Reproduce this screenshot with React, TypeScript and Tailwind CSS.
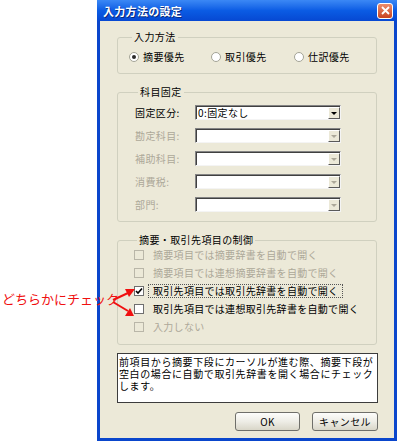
import React from 'react';

const ROWS = [
  { label: '固定区分:', value: '0:固定なし', enabled: true },
  { label: '勘定科目:', value: '', enabled: false },
  { label: '補助科目:', value: '', enabled: false },
  { label: '消費税:', value: '', enabled: false },
  { label: '部門:', value: '', enabled: false },
];

const CHECKS = [
  { text: '摘要項目では摘要辞書を自動で開く', enabled: false, checked: false, focus: false },
  { text: '摘要項目では連想摘要辞書を自動で開く', enabled: false, checked: false, focus: false },
  { text: '取引先項目では取引先辞書を自動で開く', enabled: true, checked: true, focus: true },
  { text: '取引先項目では連想取引先辞書を自動で開く', enabled: true, checked: false, focus: false },
  { text: '入力しない', enabled: false, checked: false, focus: false },
];

function Radio({ label, selected, width }: { label: string; selected?: boolean; width: string }) {
  return (
    <div className={`flex items-center ${width}`}>
      <span className="w-[10px] h-[10px] rounded-full bg-white border border-[#a4a496] flex items-center justify-center">
        {selected && <span className="w-[4px] h-[4px] rounded-full bg-[#2a2a2a]" />}
      </span>
      <span className="ml-[4px]">{label}</span>
    </div>
  );
}

function Combo({ value, enabled }: { value: string; enabled: boolean }) {
  return (
    <div className="w-[146px] h-[15px] flex bg-white border border-t-[#848484] border-l-[#848484] border-b-[#f4f4f4] border-r-[#f4f4f4] shadow-[inset_1px_1px_0_#404040]">
      <div className="flex-1 pl-[2px] pt-[1px] leading-[12px]">{value}</div>
      <div className="mt-[1px] w-[12px] bg-[#ece9d8] border border-t-white border-l-white border-b-[#5a5a5a] border-r-[#5a5a5a] flex items-center justify-center">
        <span className={`w-0 h-0 border-x-[3px] border-x-transparent border-t-[3px] ${enabled ? 'border-t-black' : 'border-t-[#aca899]'}`} />
      </div>
    </div>
  );
}

function Check({ enabled, checked }: { enabled: boolean; checked: boolean }) {
  return (
    <span
      className={`w-[10px] h-[10px] border flex items-center justify-center ${
        enabled ? 'bg-white border-[#6f6f6f]' : 'bg-[#ece9d8] border-[#b9b6a8]'
      }`}
    >
      {checked && (
        <svg width="8" height="8" viewBox="0 0 8 8">
          <path d="M1 4 L3 6 L7 1.5" stroke="#000" strokeWidth="1.6" fill="none" />
        </svg>
      )}
    </span>
  );
}

export default function App() {
  return (
    <div className="relative w-[397px] h-[441px] bg-white overflow-hidden font-['Noto_Sans_CJK_JP',sans-serif] text-[10px] leading-[12px] text-black">
      <div className="ml-[97px] w-[300px] h-[441px] flex flex-col bg-[#0a46cc]">
        {/* title bar */}
        <div className="h-[21px] flex items-center justify-between pl-[6px] pr-[4px] bg-gradient-to-b from-[#3b88f5] via-[#0b5ce4] to-[#0748d2]">
          <span className="text-white font-bold text-[11px] tracking-[0.3px] [text-shadow:1px_1px_0_#0a2a7a]">入力方法の設定</span>
          <div className="w-[16px] h-[16px] rounded-[3px] border border-white bg-gradient-to-b from-[#eb8c6c] to-[#c8431f] flex items-center justify-center">
            <svg width="9" height="9" viewBox="0 0 9 9">
              <path d="M1 1 L8 8 M8 1 L1 8" stroke="#fff" strokeWidth="1.8" />
            </svg>
          </div>
        </div>

        <div className="mx-[3px] mb-[3px] flex-1 bg-[#ece9d8] flex flex-col tracking-[0.4px]">
          {/* 入力方法 */}
          <fieldset className="mt-[10px] mx-[17px] border border-[#d0d0bf] rounded-[3px] pl-[11px] pb-[10px]">
            <legend className="ml-[3px] px-[2px]">入力方法</legend>
            <div className="flex pt-[8px] h-[20px]">
              <Radio label="摘要優先" selected width="w-[82px]" />
              <Radio label="取引優先" width="w-[83px]" />
              <Radio label="仕訳優先" width="w-[82px]" />
            </div>
          </fieldset>

          {/* 科目固定 */}
          <fieldset className="mt-[12px] mx-[17px] border border-[#d0d0bf] rounded-[3px] pl-[17px] pb-[9px]">
            <legend className="ml-[3px] px-[2px]">科目固定</legend>
            <div className="flex flex-col gap-[8px] pt-[7px]">
              {ROWS.map((r) => (
                <div key={r.label} className="flex items-center h-[15px]">
                  <span className={`w-[60px] ${r.enabled ? 'text-black' : 'text-[#aca899]'}`}>{r.label}</span>
                  <Combo value={r.value} enabled={r.enabled} />
                </div>
              ))}
            </div>
          </fieldset>

          {/* 摘要・取引先項目の制御 */}
          <fieldset className="mt-[12px] mx-[17px] border border-[#d0d0bf] rounded-[3px] pl-[16px] pb-[8px]">
            <legend className="ml-[3px] px-[2px]">摘要・取引先項目の制御</legend>
            <div className="flex flex-col">
              {CHECKS.map((c) => (
                <div key={c.text} className="h-[18px] flex items-center">
                  <Check enabled={c.enabled} checked={c.checked} />
                  <span
                    className={`ml-[4px] px-[4px] border border-dotted tracking-[0.3px] ${
                      c.focus ? 'border-[#555]' : 'border-transparent'
                    } ${c.enabled ? 'text-black' : 'text-[#aca899]'}`}
                  >
                    {c.text}
                  </span>
                </div>
              ))}
            </div>
          </fieldset>

          {/* description */}
          <div className="mt-[8px] ml-[17px] mr-[16px] h-[50px] bg-white border border-[#3c3c3c] pl-[1px] pt-[2px] tracking-[0.6px] flex flex-col">
            <span className="leading-[12px]">前項目から摘要下段にカーソルが進む際、摘要下段が</span>
            <span className="leading-[12px]">空白の場合に自動で取引先辞書を開く場合にチェック</span>
            <span className="leading-[12px]">します。</span>
          </div>

          {/* buttons */}
          <div className="mt-[9px] mr-[16px] flex justify-end gap-[12px]">
            <button className="w-[65px] h-[19px] rounded-[3px] border border-[#6f6f6a] bg-gradient-to-b from-[#fdfdfb] via-[#eeede6] to-[#d9d6c8] text-[10px] leading-[12px]">
              OK
            </button>
            <button className="w-[66px] h-[19px] rounded-[3px] border border-[#6f6f6a] bg-gradient-to-b from-[#fdfdfb] via-[#eeede6] to-[#d9d6c8] text-[10px] leading-[12px] tracking-[0.4px]">
              キャンセル
            </button>
          </div>
        </div>
      </div>

      {/* annotation */}
      <div className="absolute left-[2px] top-[292px] text-[13px] leading-[14px] text-[#f01010]">どちらかにチェック</div>
      <svg className="absolute left-0 top-0 pointer-events-none" width="397" height="441">
        <g stroke="#f01010" strokeWidth="2" fill="#f01010">
          <line x1="113" y1="300" x2="128" y2="293" />
          <polygon points="135,289 125,289 129,297" stroke="none" />
          <line x1="113" y1="302" x2="128" y2="311" />
          <polygon points="134,316 125,316 130,308" stroke="none" />
        </g>
      </svg>
    </div>
  );
}
